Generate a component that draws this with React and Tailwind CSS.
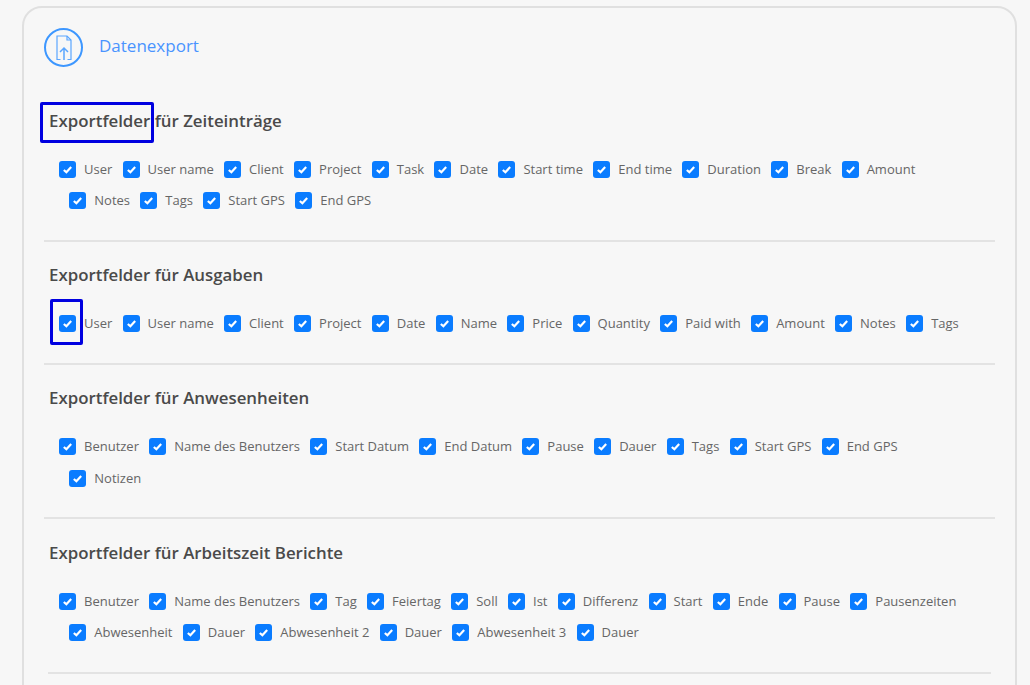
const SECTIONS = [
  {
    title: 'Exportfelder für Zeiteinträge',
    fields: ['User', 'User name', 'Client', 'Project', 'Task', 'Date', 'Start time', 'End time', 'Duration', 'Break', 'Amount', 'Notes', 'Tags', 'Start GPS', 'End GPS'],
  },
  {
    title: 'Exportfelder für Ausgaben',
    fields: ['User', 'User name', 'Client', 'Project', 'Date', 'Name', 'Price', 'Quantity', 'Paid with', 'Amount', 'Notes', 'Tags'],
  },
  {
    title: 'Exportfelder für Anwesenheiten',
    fields: ['Benutzer', 'Name des Benutzers', 'Start Datum', 'End Datum', 'Pause', 'Dauer', 'Tags', 'Start GPS', 'End GPS', 'Notizen'],
  },
  {
    title: 'Exportfelder für Arbeitszeit Berichte',
    fields: ['Benutzer', 'Name des Benutzers', 'Tag', 'Feiertag', 'Soll', 'Ist', 'Differenz', 'Start', 'Ende', 'Pause', 'Pausenzeiten', 'Abwesenheit', 'Dauer', 'Abwesenheit 2', 'Dauer', 'Abwesenheit 3', 'Dauer'],
  },
]

function Field({ label }) {
  return (
    <label className="flex items-center h-[17px] ml-[10.3px] first:ml-0 mb-[14.5px]">
      <span className="w-[17px] h-[17px] rounded-[3px] bg-[#0a7cff] flex items-center justify-center shrink-0">
        <svg viewBox="0 0 12 12" className="w-[11px] h-[11px]" fill="none" stroke="#fff" strokeWidth="2.4">
          <path d="M2 6.5 L4.8 9 L10 3.4" />
        </svg>
      </span>
      <span className="ml-2 text-[13px] leading-[17px] text-[#666] whitespace-nowrap">{label}</span>
    </label>
  )
}

function Section({ title, fields, last }) {
  return (
    <section className="pt-[22.4px]">
      <h3 className="ml-[5px] text-[16.85px] leading-[22px] font-semibold text-[#4a4a4a]">{title}</h3>
      <div className="flex flex-wrap pl-[15px] pr-[25px] mt-[29px]">
        {fields.map((f, i) => <Field key={i} label={f} />)}
      </div>
      <div className={last ? 'mt-[16px] mx-[4px] h-[2px] bg-[#e3e3e3]' : 'mt-[16px] h-[2px] bg-[#e3e3e3]'} />
    </section>
  )
}

export default function App() {
  return (
    <div className="relative h-[685px] overflow-hidden bg-[#f7f7f7]" style={{ fontFamily: '"Open Sans", "Noto Sans", sans-serif' }}>
      <div className="mr-[13px] ml-[22px] mt-[6px] h-[720px] border-2 border-[#e0e0e0] rounded-[20px] px-[20px] pt-[20px]">
        <div className="flex items-center h-[39px]">
          <span className="w-[39px] h-[39px] rounded-full border-[2.5px] border-[#3d97ff] flex items-center justify-center">
            <svg viewBox="0 0 16 26" className="w-[16px] h-[26px]" fill="none" stroke="#5aa6ff" strokeWidth="1.2">
              <path d="M4.5 24.5 H1 V1 H11 L15 5 V24.5 H11.5" />
              <path d="M11 1 V5 H15" />
              <path d="M8 25 V13 M4 17 L8 13 L12 17" strokeWidth="1.5" />
            </svg>
          </span>
          <span className="ml-[16px] mb-[3px] text-[17px] text-[#4a94ff]">Datenexport</span>
        </div>
        <div className="mt-[20.6px]">
          {SECTIONS.map((s, i) => <Section key={s.title} {...s} last={i === SECTIONS.length - 1} />)}
        </div>
      </div>
      {/* annotation boxes */}
      <div className="absolute left-[40px] top-[102px] w-[114px] h-[41px] border-[3px] border-[#0000e0] rounded-[2px]" />
      <div className="absolute left-[50px] top-[299px] w-[33px] h-[46px] border-[3px] border-[#0000e0] rounded-[2px]" />
    </div>
  )
}
